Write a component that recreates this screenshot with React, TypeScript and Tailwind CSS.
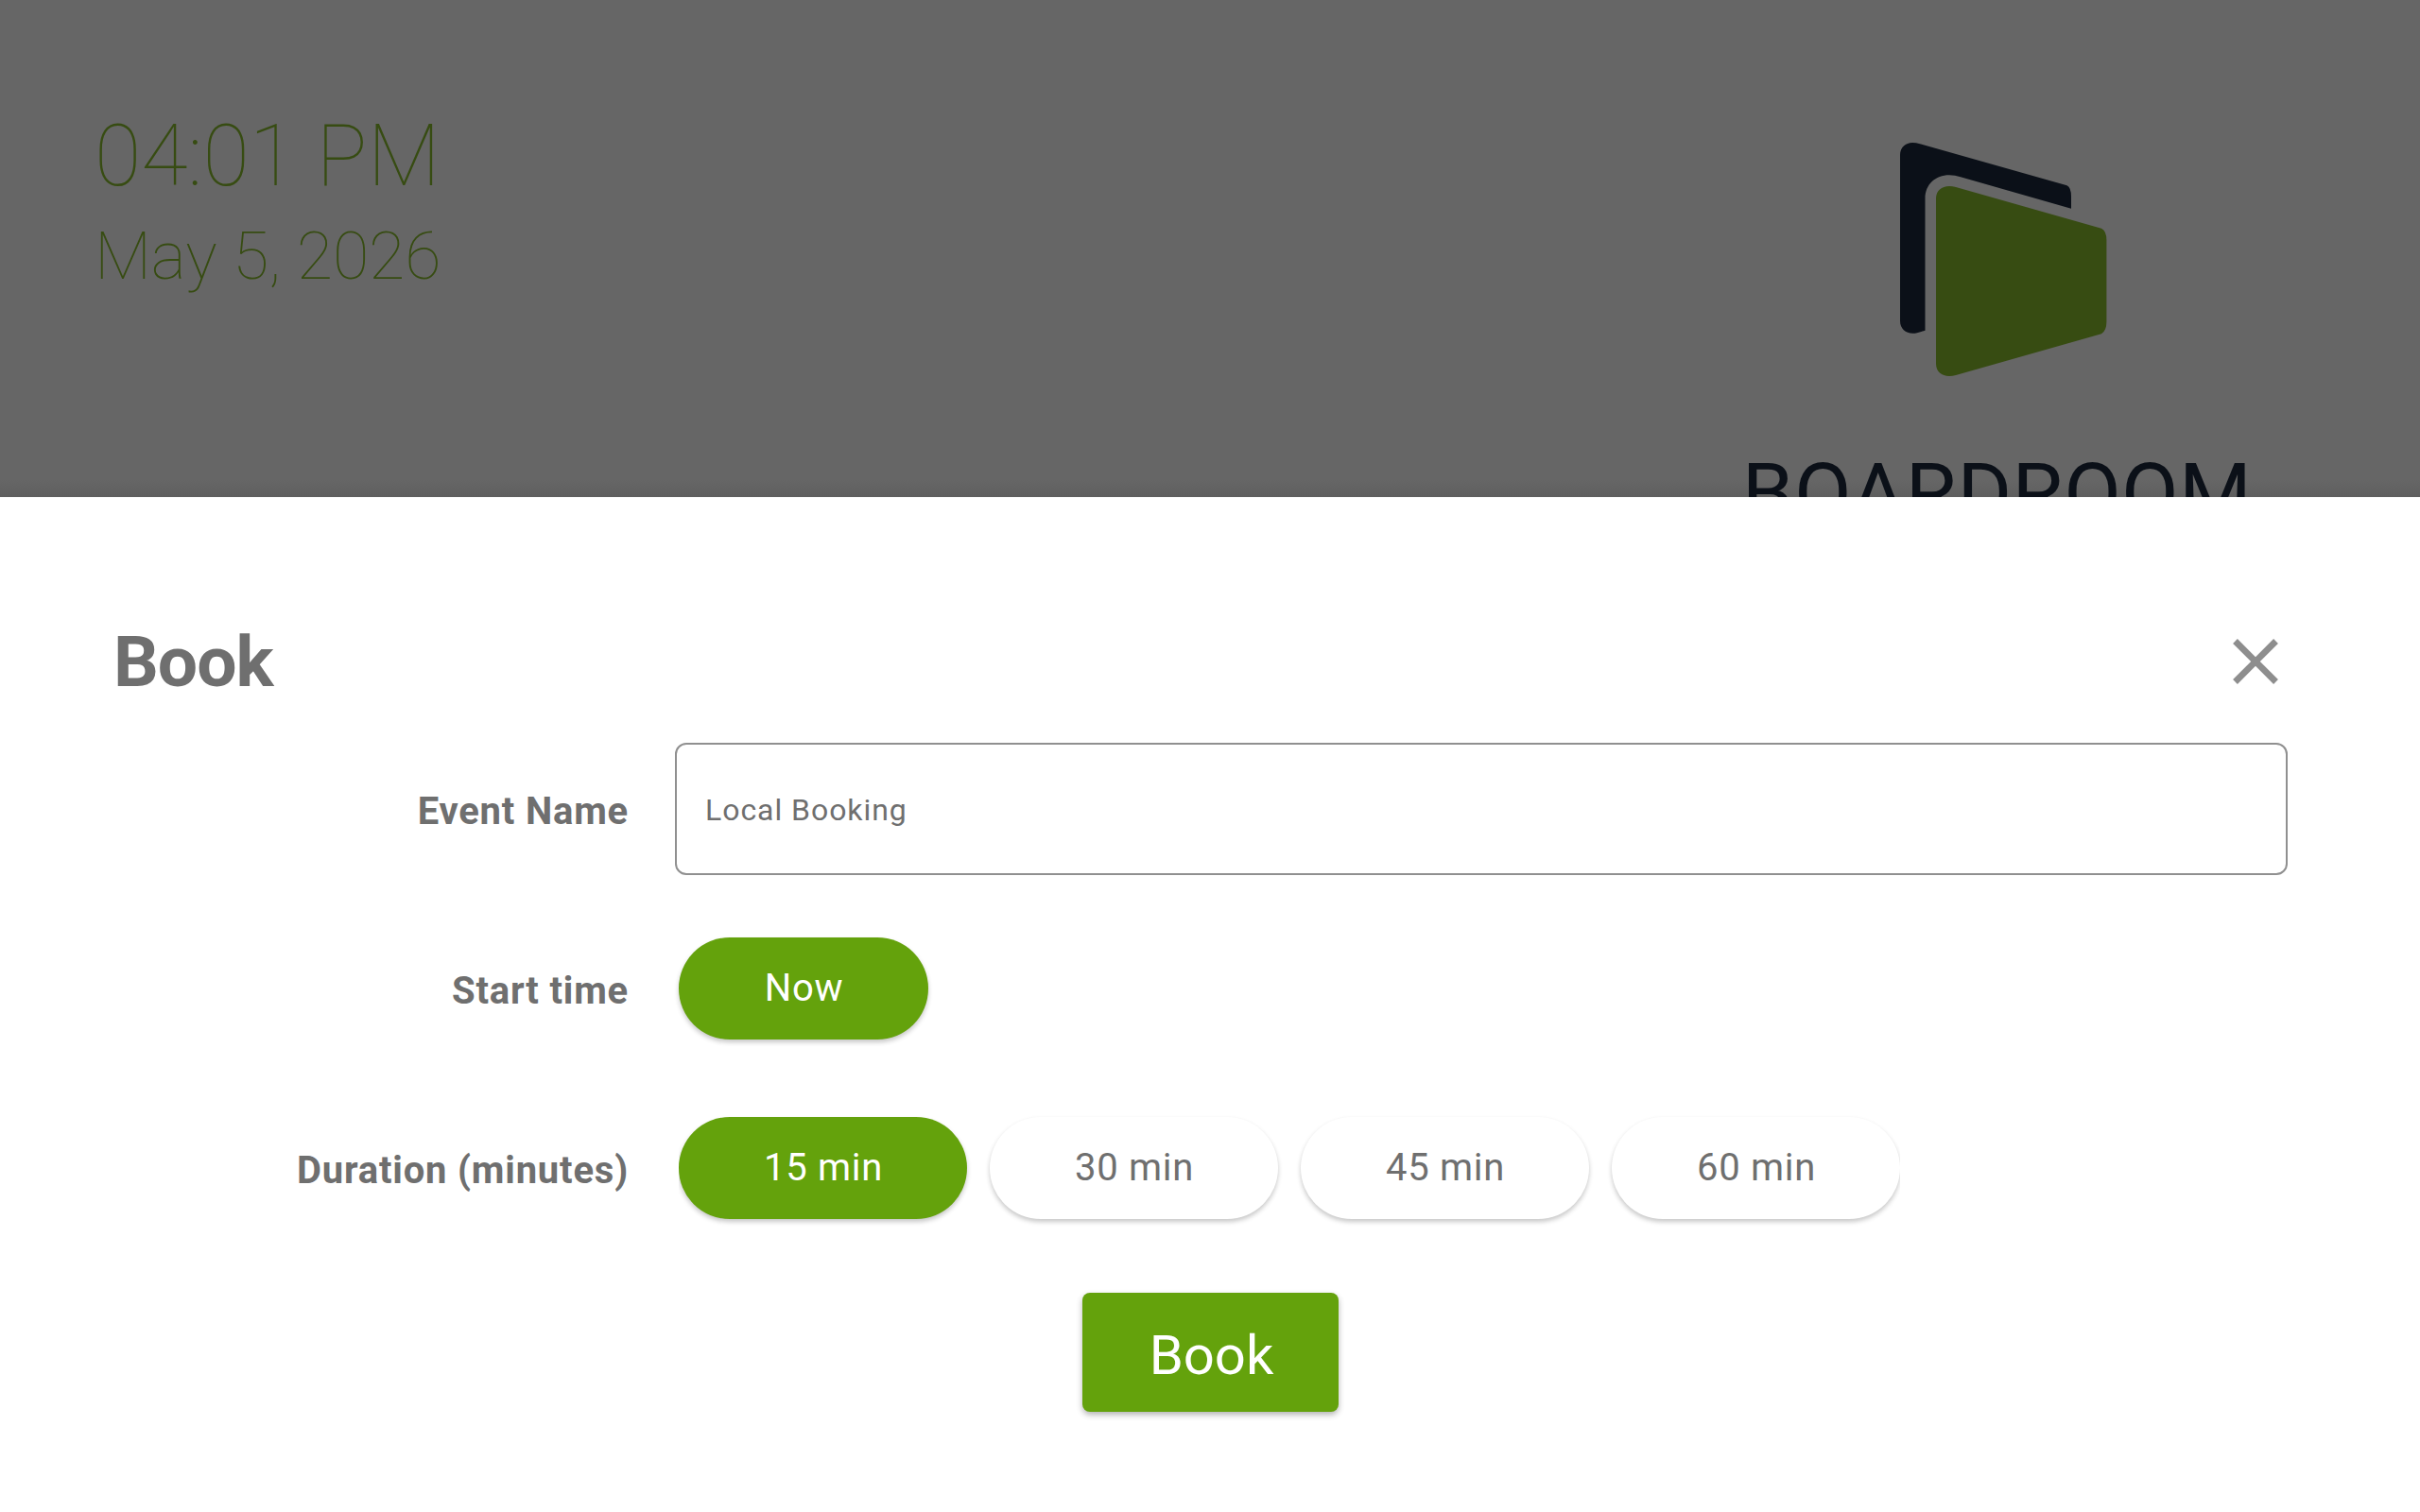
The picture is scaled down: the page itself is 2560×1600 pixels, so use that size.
import { MdClose } from "react-icons/md";

const durations = ["15 min", "30 min", "45 min", "60 min"];

function Logo() {
  return (
    <svg className="h-[250px] w-[220px] shrink-0" viewBox="0 0 220 250">
      <path
        fill="#0b1018"
        d="M0 13C0 5 6 0 13 0Q17 0 21 1.200L176.500 45.300Q181 47.500 181 57V69.700L64 36.300Q58 34.200 52 34.200C37.500 34.200 26.500 44 26.500 59V198.700L18 201.200C8 203.500 0 198 0 188.500Z"
      />
      <path
        fill="#374c12"
        d="M38 59C38 51 44 46 52 46Q55.500 46 59 47L213 90.700Q218.400 93.500 218.400 103V189.500Q218.400 199 213 202.200L59 246Q55.500 247 52 247C44 247 38 242 38 234Z"
      />
    </svg>
  );
}

function Label({ children }: { children: string }) {
  return (
    <div className="w-[665px] shrink-0 pt-1.5 text-right text-[40px] leading-[56px] font-bold tracking-[0.8px]">
      {children}
    </div>
  );
}

function Pill({ label, active, width = "w-[305px]" }: { label: string; active?: boolean; width?: string }) {
  return (
    <button
      className={`h-[108px] shrink-0 rounded-full pl-px text-[40px] leading-[56px] whitespace-nowrap tracking-[0.7px] shadow-[0_3px_5px_rgba(0,0,0,0.22)] ${width} ${
        active ? "bg-[#64a20c] text-white" : "bg-white text-[#6f6f6f]"
      }`}
    >
      {label}
    </button>
  );
}

export default function App() {
  return (
    <main className="flex h-[1600px] w-[2560px] flex-col overflow-hidden bg-[#666] font-[Roboto,sans-serif]">
      <header className="flex h-[526px] shrink-0 justify-between overflow-hidden bg-[linear-gradient(to_bottom,#666_0,#666_508px,#5e5e5e_526px)]">
        <div className="pt-[113px] pl-[100px] font-thin text-[#374c12]">
          <div className="text-[90px] leading-[106px]">04:01 PM</div>
          <div className="text-[70px] leading-[104px] tracking-[-0.15px]">May 5, 2026</div>
        </div>
        <div className="flex w-[880px] flex-col items-center pt-[151px]">
          <Logo />
          <div className="pt-[66px] pr-[15px] text-[88px] leading-[110px] tracking-[0.4px] whitespace-nowrap text-[#0b1018]">
            BOARDROOM
          </div>
        </div>
      </header>

      <section className="flex grow flex-col bg-white text-[#6f6f6f]">
        <div className="flex h-[260px] items-center justify-between pt-[88px] pr-[133px] pl-[120px]">
          <h1 className="text-[75px] leading-[90px] font-bold tracking-[-1px]">Book</h1>
          <MdClose className="size-[82px] text-[#8e8e8e]" />
        </div>

        <div className="flex h-[140px] items-center gap-[49px]">
          <Label>Event Name</Label>
          <div className="flex h-[140px] w-[1706px] items-center rounded-xl border-2 border-[#909090] px-[30px] pt-0.5 text-[32px] tracking-[0.95px]">
            Local Booking
          </div>
        </div>

        <div className="flex items-center gap-[53px] pt-[66px]">
          <Label>Start time</Label>
          <Pill label="Now" width="w-[264px]" active />
        </div>

        <div className="flex items-center gap-[53px] pt-[82px]">
          <Label>Duration (minutes)</Label>
          <div className="flex gap-6 overflow-x-clip">
            {durations.map((label, index) => (
              <Pill key={label} label={label} active={index === 0} />
            ))}
          </div>
        </div>

        <button className="mt-[78px] ml-[1145px] h-[126px] w-[271px] rounded-lg bg-[#64a20c] pt-1.5 pl-0.5 text-[58px] leading-[70px] text-white shadow-[0_3px_6px_rgba(0,0,0,0.3)]">
          Book
        </button>
      </section>
    </main>
  );
}
